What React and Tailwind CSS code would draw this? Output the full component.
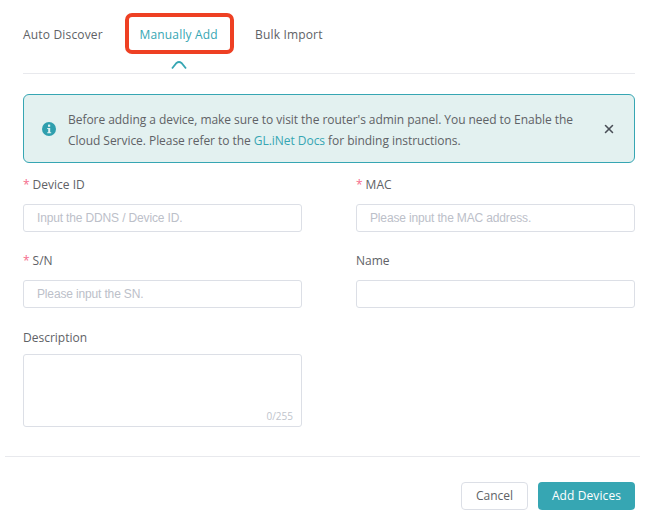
import { X } from "lucide-react";

function Label({ required, children }) {
  return (
    <div className="h-[21px] text-[12px] leading-[21px] text-[#606266]">
      {required && <span className="text-[#f56c8c] mr-[3px]">*</span>}
      {children}
    </div>
  );
}

function Field({ label, required, placeholder }) {
  return (
    <div>
      <Label required={required}>{label}</Label>
      <div className="mt-[9px] h-[28px] rounded-[3px] border border-[#dcdfe6] bg-white pl-[13px] text-[12px] tracking-[-0.15px] leading-[27px] text-[#bcc0c9] font-['Liberation_Sans',sans-serif]">
        {placeholder}
      </div>
    </div>
  );
}

export default function App() {
  return (
    <div className="relative w-[659px] h-[523px] bg-white overflow-hidden font-['Open_Sans','Noto_Sans',sans-serif]">
      {/* Tabs */}
      <div className="ml-[23px] w-[612px] h-[74px] border-b border-[#e8e9ed] relative">
        <div className="flex pt-[25px] text-[12px] tracking-[0.17px] leading-[20px] font-medium text-[#606266]">
          <span className="w-[116.5px]">Auto Discover</span>
          <span className="w-[115.5px] text-[#36a6b3]">Manually Add</span>
          <span>Bulk Import</span>
        </div>
        <svg className="absolute left-[147px] top-[60px]" width="18" height="10" viewBox="0 0 18 10" fill="none">
          <path d="M2 8.5 L6.5 3 Q9 1 11.5 3 L16 8.5" stroke="#36a6b3" strokeWidth="1.8" />
        </svg>
      </div>

      {/* Annotation */}
      <div className="absolute left-[125px] top-[13px] w-[109px] h-[41px] rounded-[7px] border-[4px] border-[#ee4023]" />

      {/* Alert */}
      <div className="ml-[23px] w-[612px] mt-[20px] h-[69px] rounded-[6px] border border-[#36a6b3] bg-[#e3f1f0] flex items-center pl-[18px] pr-[18px]">
        <svg className="shrink-0" width="14" height="14" viewBox="0 0 14 14">
          <circle cx="7" cy="7" r="7" fill="#2f9fae" />
          <rect x="6" y="2.6" width="2.2" height="2.2" fill="#e3f1f0" />
          <path d="M5.2 6h3v4.2h1v1H5.2v-1h1V7h-1z" fill="#e3f1f0" />
        </svg>
        <p className="ml-[12px] pt-[3px] flex-1 whitespace-nowrap text-[12px] tracking-[-0.045px] leading-[21px] text-[#606266]">
          Before adding a device, make sure to visit the router's admin panel. You need to Enable the
          <br />
          Cloud Service. Please refer to the <span className="text-[#36a6b3]">GL.iNet Docs</span> for binding instructions.
        </p>
        <X className="shrink-0" size={14} strokeWidth={2.6} color="#4a4f57" />
      </div>

      {/* Form */}
      <div className="ml-[23px] mt-[11px] grid grid-cols-[279px_279px] gap-x-[54px] gap-y-[18px]">
        <Field required label="Device ID" placeholder="Input the DDNS / Device ID." />
        <Field required label="MAC" placeholder="Please input the MAC address." />
        <Field required label="S/N" placeholder="Please input the SN." />
        <Field label="Name" />
        <div className="mt-[1px]">
          <Label>Description</Label>
          <div className="relative mt-[6px] h-[73px] rounded-[3px] border border-[#dcdfe6] bg-white">
            <span className="absolute right-[8px] bottom-[3px] text-[10px] leading-[14px] text-[#c0c4cc]">0/255</span>
          </div>
        </div>
      </div>

      {/* Footer */}
      <div className="ml-[5px] w-[635px] mt-[29px] border-t border-[#e8e9ed] flex justify-end gap-[10px] pt-[25px] pr-[5px] text-[12px]">
        <button className="w-[67px] h-[28px] rounded-[4px] border border-[#dcdfe6] bg-white text-[#606266]">Cancel</button>
        <button className="w-[97px] h-[28px] rounded-[4px] bg-[#36a6b3] text-white font-medium tracking-[0.1px]">Add Devices</button>
      </div>
    </div>
  );
}
